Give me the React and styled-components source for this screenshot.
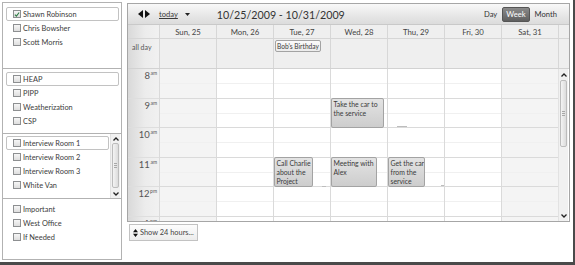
import React from 'react';
import styled, { createGlobalStyle } from 'styled-components';

const GlobalStyle = createGlobalStyle`
  html, body { margin: 0; padding: 0; background: #fff; }
  body { font-family: Lato, "Open Sans", sans-serif; color: #3c3c3c; }
  * { box-sizing: border-box; }
`;

const Frame = styled.div`
  width: 575px;
  height: 265px;
  border-right: 2px solid #4a4a4a;
  border-bottom: 3px solid #4a4a4a;
  padding: 2px 0 0 2px;
  display: flex;
  align-items: flex-start;
  background: #fff;
`;

/* ---------- Sidebar ---------- */
const Sidebar = styled.div`
  width: 120px;
  height: 258px;
  border: 1px solid #b2b2b2;
  display: flex;
  flex-direction: column;
`;

const Section = styled.div`
  height: ${p => (p.$h ? `${p.$h}px` : 'auto')};
  flex: ${p => (p.$h ? 'none' : '1')};
  border-top: ${p => (p.$first ? 'none' : '1px solid #b2b2b2')};
  display: flex;
`;

const List = styled.div`
  flex: 1;
  display: flex;
  flex-direction: column;
  padding: ${p => p.$pt}px ${p => p.$pr}px 0 3px;
`;

const Row = styled.div`
  height: 14px;
  display: flex;
  align-items: center;
  padding-left: 6px;
  border: 1px solid ${p => (p.$focus ? '#c2c2c2' : 'transparent')};
  border-radius: 2px;
  font-size: 7.4px;
  color: #3c3c3c;
  white-space: nowrap;
`;

const Box = styled.span`
  width: 8px;
  height: 8px;
  flex: none;
  border: 1px solid #8d8f91;
  background: linear-gradient(#f6f6f6, #dedede);
  display: flex;
  align-items: center;
  justify-content: center;
  margin-right: 2px;
`;

const Check = ({ checked }) => (
  <Box>
    {checked && (
      <svg width="7" height="7" viewBox="0 0 7 7">
        <path d="M1 3.6 L2.8 5.4 L6 1.2" fill="none" stroke="#2f7d46" strokeWidth="1.3" />
      </svg>
    )}
  </Box>
);

const Item = ({ label, focus, checked }) => (
  <Row $focus={focus}>
    <Check checked={checked} />
    {label}
  </Row>
);

/* ---------- Scrollbar ---------- */
const VScroll = styled.div`
  width: 10px;
  height: ${p => p.$h}px;
  flex: none;
  display: flex;
  flex-direction: column;
  background: #f1f1f1;
  border-left: 1px solid #e2e2e2;
  margin-right: ${p => p.$mr || 0}px;
`;

const ScrollBtn = styled.div`
  height: ${p => p.$h}px;
  flex: none;
  display: flex;
  align-items: center;
  justify-content: center;
`;

const Thumb = styled.div`
  height: ${p => p.$h}px;
  margin: 0 1px;
  flex: none;
  border: 1px solid #bcbcbc;
  border-radius: 2px;
  background: linear-gradient(to right, #f4f4f4, #dcdcdc);
  display: flex;
  align-items: center;
  justify-content: center;
`;

const Grip = styled.div`
  width: 3px;
  height: 5px;
  border-top: 1px solid #a8a8a8;
  border-bottom: 1px solid #a8a8a8;
  position: relative;
  &::after {
    content: '';
    position: absolute;
    left: 0;
    right: 0;
    top: 1px;
    border-top: 1px solid #a8a8a8;
  }
`;

const Fill = styled.div`
  flex: 1;
`;

const Chevron = ({ up }) => (
  <svg width="6" height="4" viewBox="0 0 6 4">
    <path d={up ? 'M0.5 3.5 L3 1 L5.5 3.5' : 'M0.5 0.5 L3 3 L5.5 0.5'} fill="none" stroke="#222" strokeWidth="1.3" />
  </svg>
);

const Scrollbar = ({ h, btn, thumbH, mr }) => (
  <VScroll $h={h} $mr={mr}>
    <ScrollBtn $h={btn}><Chevron up /></ScrollBtn>
    <Thumb $h={thumbH}><Grip /></Thumb>
    <Fill />
    <ScrollBtn $h={btn}><Chevron /></ScrollBtn>
  </VScroll>
);

/* ---------- Calendar ---------- */
const Main = styled.div`
  margin: 1px 0 0 5px;
  display: flex;
  flex-direction: column;
  align-items: flex-start;
`;

const CalBox = styled.div`
  width: 443px;
  height: 219px;
  border: 1px solid #a6a6a6;
  display: flex;
  flex-direction: column;
  background: #fff;
  overflow: hidden;
`;

const Toolbar = styled.div`
  height: 21px;
  flex: none;
  display: flex;
  align-items: center;
  padding: 0 8px 0 10px;
  background: linear-gradient(#f8f8f8, #e6e6e6 60%, #dcdcdc);
  border-bottom: 1px solid #c9c9c9;
`;

const NavArrows = styled.div`
  display: flex;
  gap: 2px;
  align-items: center;
`;

const TodayLink = styled.span`
  margin-left: 9px;
  font-size: 7.6px;
  text-decoration: underline;
  color: #3a3a3a;
`;

const Caret = styled.span`
  margin-left: 7px;
  display: flex;
`;

const Range = styled.span`
  margin-left: 27px;
  font-size: 10.7px;
  color: #333;
`;

const Views = styled.div`
  margin-left: auto;
  display: flex;
  align-items: center;
  gap: 1px;
`;

const ViewBtn = styled.span`
  height: 15px;
  padding: 0 3px;
  display: flex;
  align-items: center;
  font-size: 7.6px;
  border-radius: 2px;
  color: ${p => (p.$active ? '#fff' : '#333')};
  background: ${p => (p.$active ? 'linear-gradient(#8a8a8a, #5f5f5f)' : 'transparent')};
  border: 1px solid ${p => (p.$active ? '#555' : 'transparent')};
`;

const HeadRow = styled.div`
  height: 14px;
  flex: none;
  display: flex;
  background: #efefef;
  border-bottom: 1px solid #d6d6d6;
`;

const AllDayRow = styled.div`
  height: 30px;
  flex: none;
  display: flex;
  background: #efefef;
  border-bottom: 1px solid #d2d2d2;
`;

const Gutter = styled.div`
  width: 31px;
  flex: none;
  background: linear-gradient(to right, #d9d9d9, #ececec 55%, #f1f1f1);
  font-size: 7px;
  color: #555;
  padding: ${p => p.$pad || '0'};
`;

const DayHead = styled.div`
  width: 57px;
  flex: none;
  border-left: 1px solid #d7d7d7;
  display: flex;
  align-items: center;
  justify-content: center;
  font-size: 7.8px;
  color: #444;
`;

const DayCell = styled.div`
  width: 57px;
  flex: none;
  border-left: 1px solid #d7d7d7;
  position: relative;
`;

const Spacer = styled.div`
  width: 10px;
  flex: none;
  border-left: 1px solid #d7d7d7;
`;

const TimeArea = styled.div`
  height: 152px;
  flex: none;
  display: flex;
  overflow: hidden;
`;

const HourList = styled.div`
  display: flex;
  flex-direction: column;
`;

const Hour = styled.div`
  height: 29.5px;
  flex: none;
  position: relative;
  border-bottom: 1px solid ${p => (p.$gutter ? '#dedede' : '#dadada')};
  &::after {
    content: '';
    position: absolute;
    left: 0;
    right: 0;
    top: 14px;
    border-top: 1px solid ${p => (p.$gutter ? 'transparent' : '#f0f0f0')};
  }
`;

const TimeLabel = styled.div`
  display: flex;
  justify-content: flex-end;
  align-items: flex-start;
  padding: 2px 2px 0 0;
  color: #555;
  font-size: 9.5px;
  line-height: 10px;
  sup {
    font-size: 5px;
    line-height: 5px;
    margin-left: 0.5px;
  }
`;

const DayColumn = styled.div`
  width: 57px;
  flex: none;
  border-left: 1px solid #dadada;
  position: relative;
  background: ${p => (p.$weekend ? '#f4f4f4' : '#fff')};
`;

const Event = styled.div`
  position: absolute;
  left: ${p => p.$x}px;
  top: ${p => p.$y}px;
  width: ${p => p.$w}px;
  height: ${p => p.$h}px;
  border: 1px solid #a3a3a3;
  border-radius: 2px;
  background: ${p => (p.$light ? 'linear-gradient(#fbfbfb, #ececec)' : 'linear-gradient(#e3e3e3, #cdcdcd)')};
  font-size: ${p => (p.$light ? '6.6px' : '6.85px')};
  line-height: 8.8px;
  color: #3a3a3a;
  padding: ${p => (p.$light ? '1px 1px' : '1px 0 0 1.5px')};
  overflow: hidden;
  white-space: nowrap;
`;

const EventLine = styled.span`
  display: block;
`;

const Handle = styled.div`
  position: absolute;
  left: ${p => p.$x}px;
  top: ${p => p.$y}px;
  width: ${p => p.$w}px;
  height: 1px;
  background: #bdbdbd;
`;

const ShowBtn = styled.div`
  margin: 2px 0 0 2px;
  height: 17px;
  display: flex;
  align-items: center;
  gap: 2px;
  padding: 0 3px;
  border: 1px solid #c2c2c2;
  background: linear-gradient(#fdfdfd, #ececec);
  font-size: 7.4px;
  color: #444;
`;

const days = [
  { name: 'Sun, 25', weekend: true },
  { name: 'Mon, 26' },
  { name: 'Tue, 27' },
  { name: 'Wed, 28' },
  { name: 'Thu, 29' },
  { name: 'Fri, 30' },
  { name: 'Sat, 31', weekend: true },
];

const hours = [
  ['8', 'am'], ['9', 'am'], ['10', 'am'], ['11', 'am'], ['12', 'pm'], ['1', 'pm'],
];

const events = {
  2: [
    { x: 0, y: 88, w: 39, h: 30, lines: ['Call Charlie', 'about the', 'Project'] },
  ],
  3: [
    { x: 0, y: 29, w: 53, h: 30, lines: ['Take the car to', 'the service'] },
    { x: 0, y: 88, w: 46, h: 30, lines: ['Meeting with', 'Alex'] },
  ],
  4: [
    { x: 0, y: 88, w: 37, h: 30, lines: ['Get the car', 'from the', 'service'] },
  ],
};

const handles = {
  2: [{ x: 48, y: 117, w: 4 }],
  4: [{ x: 9, y: 57, w: 10 }, { x: 53, y: 116, w: 6 }],
};

const Arrow = ({ dir }) => (
  <svg width="5" height="8" viewBox="0 0 5 8">
    <path d={dir === 'l' ? 'M5 0 L0 4 L5 8 Z' : 'M0 0 L5 4 L0 8 Z'} fill="#111" />
  </svg>
);

export default function App() {
  return (
    <>
      <GlobalStyle />
      <Frame>
        <Sidebar>
          <Section $first $h={65}>
            <List $pt={4} $pr={2}>
              <Item label="Shawn Robinson" focus checked />
              <Item label="Chris Bowsher" />
              <Item label="Scott Morris" />
            </List>
          </Section>
          <Section $h={65}>
            <List $pt={3} $pr={2}>
              <Item label="HEAP" focus />
              <Item label="PIPP" />
              <Item label="Weatherization" />
              <Item label="CSP" />
            </List>
          </Section>
          <Section $h={65}>
            <List $pt={2} $pr={1}>
              <Item label="Interview Room 1" focus />
              <Item label="Interview Room 2" />
              <Item label="Interview Room 3" />
              <Item label="White Van" />
            </List>
            <Scrollbar h={64} btn={9} thumbH={45} mr={1} />
          </Section>
          <Section>
            <List $pt={3} $pr={2}>
              <Item label="Important" />
              <Item label="West Office" />
              <Item label="If Needed" />
            </List>
          </Section>
        </Sidebar>

        <Main>
          <CalBox>
            <Toolbar>
              <NavArrows>
                <Arrow dir="l" />
                <Arrow dir="r" />
              </NavArrows>
              <TodayLink>today</TodayLink>
              <Caret>
                <svg width="5" height="3" viewBox="0 0 5 3"><path d="M0 0 L5 0 L2.5 3 Z" fill="#222" /></svg>
              </Caret>
              <Range>10/25/2009 - 10/31/2009</Range>
              <Views>
                <ViewBtn>Day</ViewBtn>
                <ViewBtn $active>Week</ViewBtn>
                <ViewBtn>Month</ViewBtn>
              </Views>
            </Toolbar>

            <HeadRow>
              <Gutter />
              {days.map(d => (
                <DayHead key={d.name}>{d.name}</DayHead>
              ))}
              <Spacer />
            </HeadRow>

            <AllDayRow>
              <Gutter $pad="4px 0 0 4px">all day</Gutter>
              {days.map((d, i) => (
                <DayCell key={d.name}>
                  {i === 2 && (
                    <Event $light $x={1} $y={1} $w={46} $h={12}>Bob's Birthday</Event>
                  )}
                </DayCell>
              ))}
              <Spacer />
            </AllDayRow>

            <TimeArea>
              <Gutter>
                <HourList>
                  {hours.map(([n, s]) => (
                    <Hour key={n + s} $gutter>
                      <TimeLabel>{n}<sup>{s}</sup></TimeLabel>
                    </Hour>
                  ))}
                </HourList>
              </Gutter>
              {days.map((d, i) => (
                <DayColumn key={d.name} $weekend={d.weekend}>
                  <HourList>
                    {hours.map(([n, s]) => <Hour key={n + s} />)}
                  </HourList>
                  {(events[i] || []).map(ev => (
                    <Event key={ev.lines[0]} $x={ev.x} $y={ev.y} $w={ev.w} $h={ev.h}>
                      {ev.lines.map(l => <EventLine key={l}>{l}</EventLine>)}
                    </Event>
                  ))}
                  {(handles[i] || []).map((hd, k) => (
                    <Handle key={k} $x={hd.x} $y={hd.y} $w={hd.w} />
                  ))}
                </DayColumn>
              ))}
              <Scrollbar h={152} btn={11} thumbH={67} />
            </TimeArea>
          </CalBox>
          <ShowBtn>
            <svg width="5" height="8" viewBox="0 0 5 8">
              <path d="M0 3.3 L2.5 0 L5 3.3 Z M0 4.7 L2.5 8 L5 4.7 Z" fill="#111" />
            </svg>
            Show 24 hours...
          </ShowBtn>
        </Main>
      </Frame>
    </>
  );
}
